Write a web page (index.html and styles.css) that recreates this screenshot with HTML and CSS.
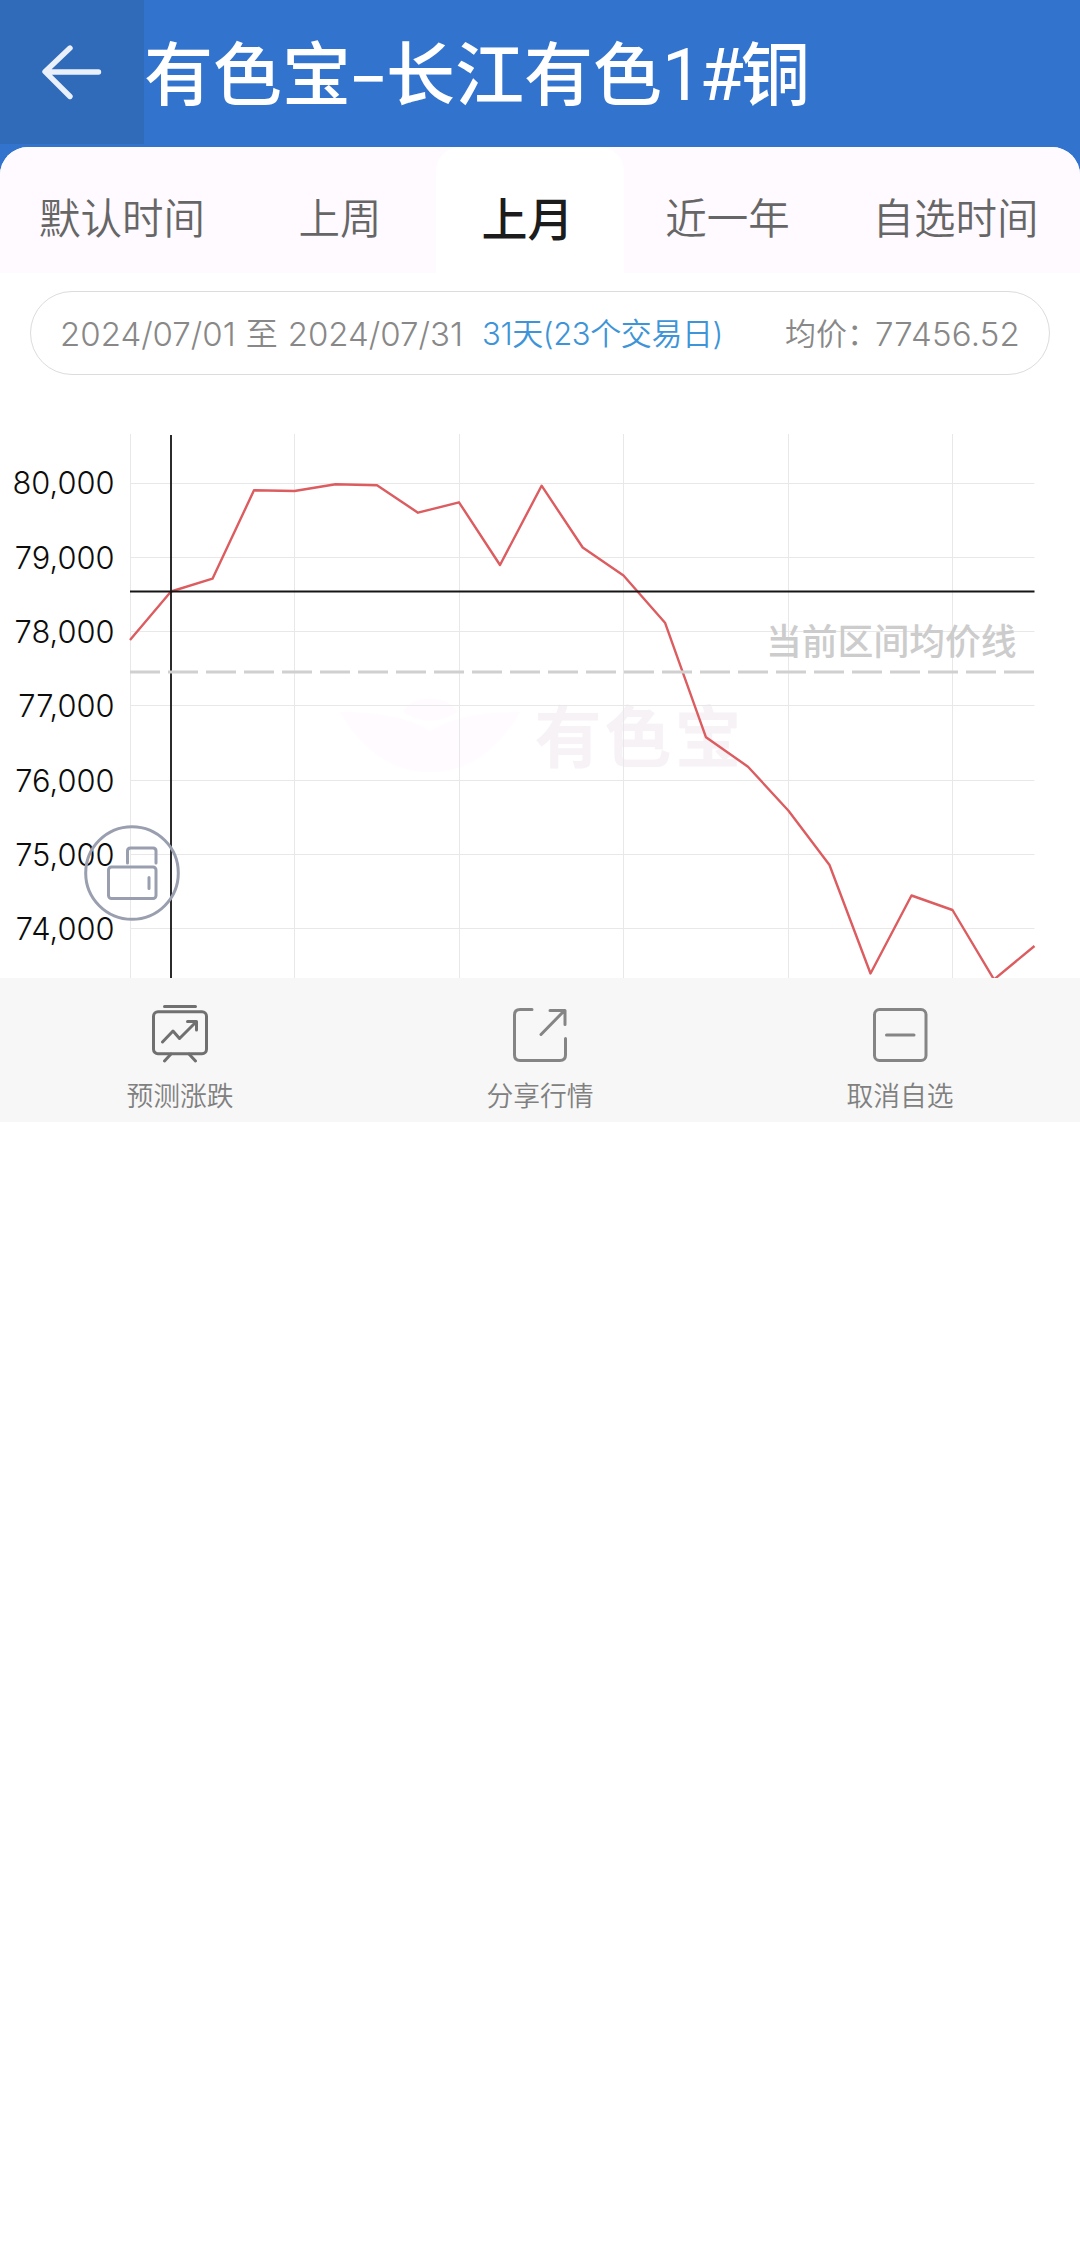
FILE: index.html
```html
<!DOCTYPE html>
<html lang="zh-CN">
<head>
<meta charset="utf-8">
<title>有色宝-长江有色1#铜</title>
<link rel="stylesheet" href="styles.css">
</head>
<body>
<header class="header">
  <div class="back">
    <svg width="144" height="144" viewBox="0 0 144 144" fill="none" stroke="#eaf0fa" stroke-width="5.4" stroke-linecap="round" stroke-linejoin="round"><path d="M70 48 45 71.700 70 96.500M46 72H98.500"/></svg>
  </div>
  <h1 class="title">有色宝<span class="dash">-</span>长江有色<span class="code">1#</span>铜</h1>
</header>
<main class="sheet">
  <nav class="tabs">
    <span class="tab tab-default">默认时间</span>
    <span class="tab tab-week">上周</span>
    <span class="tab tab-month active">上月</span>
    <span class="tab tab-year">近一年</span>
    <span class="tab tab-custom">自选时间</span>
  </nav>
  <section class="range">
    <span class="dates">2024/07/01</span>
    <span class="to">至</span>
    <span class="dates">2024/07/31</span>
    <span class="days">31天(23个交易日)</span>
    <span class="avg">均价：</span>
    <span class="value">77456.52</span>
  </section>
  <section class="chart">
    <svg width="1080" height="578" viewBox="0 400 1080 578">
      <g class="mark">
        <path d="M340 712 Q400 712 430 731 Q460 712 520 712 Q485 772 430 772 Q375 772 340 712Z"/>
        <path d="M403 712 Q412 698 430 699 Q448 698 457 712 Q430 729 403 712Z"/>
        <text x="534.500" y="762">有色宝</text>
      </g>
      <g class="grid">
        <path d="M130 483.500H1034.500M130 557.500H1034.500M130 631.500H1034.500M130 705.500H1034.500M130 780.500H1034.500M130 854.500H1034.500M130 928.500H1034.500"/>
        <path d="M130.500 434V978M294.500 434V978M459.500 434V978M623.500 434V978M788.500 434V978M952.500 434V978"/>
      </g>
      <g class="axis">
        <text x="114.500" y="493.800">80,000</text>
        <text x="114.500" y="568.500">79,000</text>
        <text x="114.500" y="642.500">78,000</text>
        <text x="114.500" y="716.500">77,000</text>
        <text x="114.500" y="791.500">76,000</text>
        <text x="114.500" y="865.500">75,000</text>
        <text x="114.500" y="939.500">74,000</text>
      </g>
      <polyline class="series" points="130,640 171,591.5 212.500,578.700 254,490.300 294.500,491 335.600,484.300 377,485.300 418,512.700 459,502.300 500,565 541.600,485.700 582.700,547.500 623.500,575.500 665,622.700 706,737.300 748,766.700 788.500,810.700 829.500,865 870.500,973.500 911.500,895.500 952.500,910 994,979.500 1034.500,946"/>
      <path class="cross" d="M171 435V978M130 591.500H1034.500"/>
      <path class="average" d="M130 672H1034.500"/>
      <text class="average-label" x="766" y="654.500">当前区间均价线</text>
      <g class="float-button">
        <circle cx="132" cy="873" r="46.300"/>
        <rect x="108.500" y="867" width="47.500" height="31.500" rx="3"/>
        <path d="M127.500 863V851Q127.500 848 130.500 848H153Q156 848 156 851V863M149 877.500V888.500"/>
      </g>
    </svg>
  </section>
</main>
<footer class="actions">
  <div class="action">
    <svg class="icon dark" width="60" height="60" viewBox="0 0 60 60"><path d="M14.500 4.500H45.500M21 52 14.500 59M39 52 45.500 59M12.500 40 23 29 29.500 36.500 46 20M37.500 19.500H46.500V28"/><rect x="3.500" y="9.700" width="53" height="42" rx="4.500"/></svg>
    <span>预测涨跌</span>
  </div>
  <div class="action">
    <svg class="icon" width="60" height="60" viewBox="0 0 60 60"><path d="M22 7.500H10Q4.500 7.500 4.500 13V53Q4.500 58.500 10 58.500H50Q55.500 58.500 55.500 53V36.500M31 32.500 54 9M40 8.500H55V22.500"/></svg>
    <span>分享行情</span>
  </div>
  <div class="action">
    <svg class="icon" width="60" height="60" viewBox="0 0 60 60"><rect x="4.500" y="7.500" width="51.500" height="51" rx="5"/><path d="M16.500 33H44"/></svg>
    <span>取消自选</span>
  </div>
</footer>
</body>
</html>
```
FILE: styles.css
```css
* { box-sizing: border-box; }

body {
  margin: 0;
  background: #fff;
  font-family: Inter, "Noto Sans CJK SC", sans-serif;
}

svg { display: block; }

.header {
  display: flex;
  height: 175px;
  background: #3173cd;
  color: #fff;
}

.back {
  width: 144px;
  height: 144px;
  background: #306bb9;
}

.title {
  margin: 0;
  font-size: 69px;
  font-weight: 500;
  line-height: 151px;
  white-space: nowrap;
}

.dash {
  display: inline-block;
  width: 35px;
  font-weight: 400;
  line-height: 1;
  text-align: center;
  transform: scaleX(1.3);
}

.code { font-family: Roboto, sans-serif; font-size: 72px; font-weight: 400; line-height: 1; letter-spacing: -3px; }

.sheet {
  margin-top: -28px;
  border-radius: 28px 28px 0 0;
  overflow: hidden;
  background: #fff;
}

.tabs {
  display: grid;
  grid-template-columns: 244px 192px 188px 207px 249px;
  height: 126px;
  background: #fefaff;
}

.tab {
  color: #666;
  font-size: 41.5px;
  font-weight: 350;
  line-height: 144px;
  text-align: center;
  white-space: nowrap;
}

.tab.active {
  padding-right: 5px;
  border-radius: 24px 24px 0 0;
  background: #fff;
  color: #1c1c1c;
  font-size: 46px;
  font-weight: 500;
}

.range {
  display: flex;
  align-items: center;
  width: 1020px;
  height: 84px;
  margin: 18px 30px 25px;
  padding: 2px 29px 0 29px;
  border: 1px solid #dcdcdc;
  border-radius: 42px;
  color: #888;
  font-size: 33px;
  font-weight: 300;
  line-height: 82px;
  white-space: nowrap;
}

.to { margin: 0 10px; font-size: 32px; font-weight: 350; }
.days { margin-left: 19px; color: #3e94d8; font-size: 31px; font-weight: 350; letter-spacing: -.4px; }
.avg { margin-left: auto; margin-right: -3px; font-size: 31px; font-weight: 350; }
.value { letter-spacing: .2px; }

.chart { height: 578px; }

.mark { fill: #fffbff; }
.mark text { fill: #f6f2f6; font-size: 67px; font-weight: 700; letter-spacing: 3px; }
.grid { fill: none; stroke: #e8e8e8; stroke-width: 1; }
.axis { fill: #0c0c0c; font-size: 30.800px; font-weight: 300; text-anchor: end; }
.series { fill: none; stroke: #dc5c60; stroke-width: 2.4; stroke-linejoin: round; }
.cross { fill: none; stroke: #151515; stroke-width: 1.8; }
.average { fill: none; stroke: #d0d0d0; stroke-width: 3; stroke-dasharray: 30 8; }
.average-label { fill: #ccc; font-size: 35.800px; font-weight: 500; }
.float-button { fill: none; stroke: #9a9faf; stroke-width: 3; stroke-linecap: round; }

.actions {
  display: grid;
  grid-template-columns: repeat(3, 1fr);
  height: 144px;
  background: #f7f7f7;
}

.action {
  display: flex;
  flex-direction: column;
  align-items: center;
  padding-top: 24px;
  color: #808080;
  font-size: 26.800px;
  font-weight: 350;
  line-height: 68px;
}

.icon { fill: none; stroke: #858585; stroke-width: 3; stroke-linecap: round; stroke-linejoin: round; overflow: visible; }
.icon.dark { stroke: #707070; }
```
